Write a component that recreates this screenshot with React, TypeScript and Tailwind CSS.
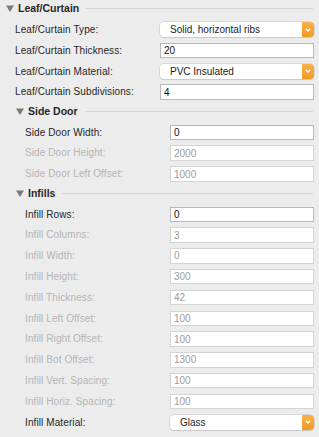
import React from "react";

type Row =
  | { kind: "input"; label: string; value: string; disabled?: boolean }
  | { kind: "select"; label: string; value: string };

function Tri() {
  return (
    <svg width="8" height="7" viewBox="0 0 8 7" className="shrink-0">
      <path d="M0 0.5 H8 L4 7 Z" fill="#7a7a7a" />
    </svg>
  );
}

function Header({ title, indent, h }: { title: string; indent: boolean; h: string }) {
  return (
    <div className={`flex items-center ${h} ${indent ? "pl-[16px]" : "pl-[6px]"} pr-[6px]`}>
      <Tri />
      <span className="ml-[4px] font-bold text-[10.5px] text-[#262626]">{title}</span>
      <div className="flex-1 ml-[7px] h-px bg-[#d5d5d5]" />
    </div>
  );
}

function Select({ value }: { value: string }) {
  return (
    <div className="flex h-[15px] w-full rounded-[4px] bg-white shadow-[0_0_0_0.5px_#c4c4c4,0_1px_1px_rgba(0,0,0,0.12)] overflow-hidden">
      <div className="flex-1 flex items-center pl-[10px] text-[10px] text-[#222]">{value}</div>
      <div className="w-[12px] flex items-center justify-center bg-gradient-to-b from-[#f7b24a] to-[#ef9a1e]">
        <svg width="6" height="4" viewBox="0 0 6 4">
          <path d="M0.8 0.8 L3 3 L5.2 0.8" stroke="white" strokeWidth="1.3" fill="none" />
        </svg>
      </div>
    </div>
  );
}

function Input({ value, disabled }: { value: string; disabled?: boolean }) {
  return (
    <div
      className={`flex items-center h-[15.5px] w-full bg-white border pl-[3px] text-[10px] ${
        disabled ? "border-[#d4d4d4] text-[#9c9c9c]" : "border-[#b9b9b9] text-[#111]"
      }`}
    >
      {value}
    </div>
  );
}

function Rows({ rows, labelPl, ctrlLeft }: { rows: Row[]; labelPl: number; ctrlLeft: number }) {
  return (
    <div>
      {rows.map((r, i) => (
        <div key={i} className="flex items-start h-[20.8px]">
          <div
            style={{ width: ctrlLeft, paddingLeft: labelPl }}
            className={`h-[21px] flex items-center text-[10px] tracking-[0.1px] ${
              r.kind === "input" && r.disabled ? "text-[#b5b5b5]" : "text-[#262626]"
            }`}
          >
            {r.label}
          </div>
          <div className="flex-1 pr-[5px] pt-[3px]">
            {r.kind === "select" ? <Select value={r.value} /> : <Input value={r.value} disabled={r.disabled} />}
          </div>
        </div>
      ))}
    </div>
  );
}

export default function App() {
  const leaf: Row[] = [
    { kind: "select", label: "Leaf/Curtain Type:", value: "Solid, horizontal ribs" },
    { kind: "input", label: "Leaf/Curtain Thickness:", value: "20" },
    { kind: "select", label: "Leaf/Curtain Material:", value: "PVC Insulated" },
    { kind: "input", label: "Leaf/Curtain Subdivisions:", value: "4" },
  ];
  const side: Row[] = [
    { kind: "input", label: "Side Door Width:", value: "0" },
    { kind: "input", label: "Side Door Height:", value: "2000", disabled: true },
    { kind: "input", label: "Side Door Left Offset:", value: "1000", disabled: true },
  ];
  const infills: Row[] = [
    { kind: "input", label: "Infill Rows:", value: "0" },
    { kind: "input", label: "Infill Columns:", value: "3", disabled: true },
    { kind: "input", label: "Infill Width:", value: "0", disabled: true },
    { kind: "input", label: "Infill Height:", value: "300", disabled: true },
    { kind: "input", label: "Infill Thickness:", value: "42", disabled: true },
    { kind: "input", label: "Infill Left Offset:", value: "100", disabled: true },
    { kind: "input", label: "Infill Right Offset:", value: "100", disabled: true },
    { kind: "input", label: "Infill Bot Offset:", value: "1300", disabled: true },
    { kind: "input", label: "Infill Vert. Spacing:", value: "100", disabled: true },
    { kind: "input", label: "Infill Horiz. Spacing:", value: "100", disabled: true },
    { kind: "select", label: "Infill Material:", value: "Glass" },
  ];
  return (
    <div
      className="w-[319px] h-[437px] bg-[#ececec] overflow-hidden"
      style={{ fontFamily: '"Liberation Sans", Arial, sans-serif' }}
    >
      <Header title="Leaf/Curtain" indent={false} h="h-[17px]" />
      <div className="h-[2px]" />
      <Rows rows={leaf} labelPl={15} ctrlLeft={160} />
      <Header title="Side Door" indent h="h-[19.5px]" />
      <Rows rows={side} labelPl={25} ctrlLeft={170} />
      <Header title="Infills" indent h="h-[19.5px]" />
      <Rows rows={infills} labelPl={25} ctrlLeft={170} />
    </div>
  );
}
